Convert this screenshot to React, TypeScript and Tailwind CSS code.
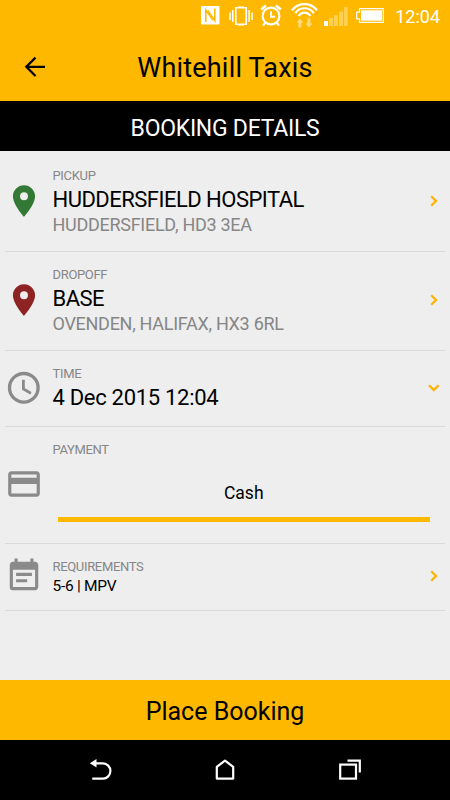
import type { ReactNode } from 'react';
import { MdPlace, MdPayment, MdEventNote } from 'react-icons/md';

function StatusBar() {
  return (
    <div className="h-[33px] flex items-start justify-end pr-[10px] text-white">
      {/* NFC */}
      <svg className="w-[19px] h-[19px] mt-[6px]" viewBox="0 0 19 19">
        <rect x="0" y="0" width="18.5" height="18.5" rx="1" fill="currentColor" />
        <path d="M4.8 16V4L11.8 14.2" fill="none" stroke="#ffb800" strokeWidth="1.5" />
        <path d="M13.8 2.6V14.6L6.8 4.4" fill="none" stroke="#ffb800" strokeWidth="1.5" />
      </svg>
      {/* Vibrate */}
      <svg className="w-6 h-5 mt-[6px] ml-[9px]" viewBox="0 0 24 20" fill="none" stroke="currentColor" strokeWidth="1.6">
        <path d="M6.8 1.8H17.2V18.2H6.8Z" />
        <path d="M9 1.2H15M9 18.8H15" />
        <path d="M3.8 4V16M1 6.5V14M20.2 4V16M23 6.5V14" />
      </svg>
      {/* Alarm */}
      <svg className="w-[22px] h-[23px] mt-[4px] ml-[7px]" viewBox="0 0 22 23" fill="none" stroke="currentColor" strokeWidth="2.2">
        <circle cx="11" cy="12" r="8.4" />
        <path d="M11 7.2V12.7H15.2" strokeWidth="1.9" />
        <path d="M1.2 5.6L6 1.5M20.8 5.6L16 1.5" strokeWidth="2.6" />
        <path d="M5.8 18L3 21.6M16.2 18L19 21.6" />
      </svg>
      {/* Wifi */}
      <svg className="w-[27px] h-[25px] mt-[3px] ml-[9px]" viewBox="0 0 27 25" fill="none" stroke="currentColor" strokeWidth="2.2">
        <path d="M1 7.3C7.5 -1 19.5 -1 26 7.3" />
        <path d="M4.2 10.2C9 3.6 18 3.6 22.8 10.2" />
        <path d="M7.5 13C10.5 8.6 16.5 8.6 19.5 13" />
        <g fill="#ffdb80" stroke="none">
          <path d="M8.9 15.5L12.3 19.5H10.4V24.5H7.4V19.5H5.5Z" />
          <path d="M17.9 24.5L14.5 20.5H16.4V15.5H19.4V20.5H21.3Z" />
        </g>
      </svg>
      {/* Signal */}
      <svg className="w-6 h-[19px] mt-[7px] ml-[6px]" viewBox="0 0 24 19" fill="#ffd050">
        <rect x="0" y="14" width="4" height="5" fill="currentColor" />
        <rect x="5" y="11" width="4" height="8" />
        <rect x="10" y="8" width="4" height="11" />
        <rect x="15" y="4.5" width="4" height="14.5" />
        <rect x="20" y="0" width="3.6" height="19" />
      </svg>
      {/* Battery */}
      <svg className="w-[28px] h-[15px] mt-[8px] ml-[8px]" viewBox="0 0 28 15">
        <path d="M3.5 0.7H27.3V14.3H3.5V10.8H0.7V4.2H3.5Z" fill="none" stroke="currentColor" strokeWidth="1.2" />
        <rect x="5" y="2.3" width="21" height="10.4" fill="currentColor" />
      </svg>
      <span className="ml-[11px] mt-[5px] text-[18px] leading-6">12:04</span>
    </div>
  );
}

function ArrowBack() {
  return (
    <svg className="w-[30px] h-[30px]" viewBox="0 0 30 30" fill="none" stroke="currentColor" strokeWidth="2.2">
      <path d="M25 14.8H6.5M15.5 5.6L6.3 14.8L15.5 24" />
    </svg>
  );
}

function ChevronRight() {
  return (
    <svg className="w-[22px] h-[22px]" viewBox="0 0 22 22" fill="none" stroke="currentColor" strokeWidth="2.3">
      <path d="M8.2 6.2L13 11L8.2 15.8" />
    </svg>
  );
}

function ChevronDown() {
  return (
    <svg className="w-[22px] h-[22px]" viewBox="0 0 22 22" fill="none" stroke="currentColor" strokeWidth="2.3">
      <path d="M6 8.2L10.8 13L15.6 8.2" />
    </svg>
  );
}

function Clock() {
  return (
    <svg className="w-[38px] h-[38px]" viewBox="0 0 38 38" fill="none" stroke="currentColor">
      <circle cx="18.8" cy="18.8" r="14.3" strokeWidth="3.3" />
      <path d="M18.4 10.8V19.9L25.9 24.2" strokeWidth="2.8" />
    </svg>
  );
}

interface RowProps {
  label: string;
  icon: ReactNode;
  height: string;
  arrow?: ReactNode;
  children: ReactNode;
}

function Row({ label, icon, height, arrow, children }: RowProps) {
  return (
    <div className={`mx-[5px] flex border-b border-[#dadada] ${height}`}>
      <div className="w-[47.5px] pb-[2px] flex items-center text-[38px] text-[#8a8a8a]">{icon}</div>
      <div className="flex-1 pt-[15px] whitespace-nowrap">
        <div className="text-[13px] leading-4 tracking-[-0.33px] text-[#868686]">{label}</div>
        {children}
      </div>
      {arrow && <div className="pb-[2px] flex items-center text-[#ffb300]">{arrow}</div>}
    </div>
  );
}

function Address({ title, detail }: { title: string; detail: string }) {
  return (
    <>
      <div className="text-[22px] leading-[31px] tracking-[-0.52px]">{title}</div>
      <div className="text-[18px] leading-5 tracking-[-0.28px] text-[#868686]">{detail}</div>
    </>
  );
}

function NavBar() {
  return (
    <nav className="h-[60px] pt-px bg-black text-white flex items-center justify-between px-[88px]">
      <svg className="w-6 h-6" viewBox="0 0 24 24">
        <path d="M7 4.4H15A7.2 7.4 0 0 1 15 19.6H4.2" fill="none" stroke="currentColor" strokeWidth="2.2" />
        <path d="M1.8 4.3L8.5 0V8.4Z" fill="currentColor" />
      </svg>
      <svg className="w-6 h-6" viewBox="0 0 24 24" fill="none" stroke="currentColor" strokeWidth="2.2" strokeLinejoin="round">
        <path d="M3.8 7.8L12 1.6L20.2 7.8V19.6H3.8Z" />
      </svg>
      <svg className="w-6 h-6" viewBox="0 0 24 24" fill="none" stroke="currentColor" strokeWidth="2.2">
        <rect x="2.2" y="5.6" width="15.8" height="14" />
        <path d="M9.5 1.6H21.8V13.4" />
      </svg>
    </nav>
  );
}

export default function App() {
  return (
    <div className="w-[450px] h-[800px] flex flex-col bg-[#eeeeee] text-black font-[Roboto,sans-serif] overflow-hidden">
      <div className="bg-[#ffb800]">
        <StatusBar />
        <header className="h-[68px] flex items-center px-5">
          <button className="w-[30px]">
            <ArrowBack />
          </button>
          <h1 className="flex-1 pt-0.5 pr-[30px] text-center text-[27px] leading-8 tracking-[0.2px]">Whitehill Taxis</h1>
        </header>
      </div>
      <h2 className="h-[50px] bg-black text-white text-center text-[23px] leading-[55px] tracking-[-0.28px]">
        BOOKING DETAILS
      </h2>

      <main className="flex-1 pt-[2px]">
        <Row label="PICKUP" icon={<MdPlace className="text-[#347835]" />} height="h-[99px]" arrow={<ChevronRight />}>
          <Address title="HUDDERSFIELD HOSPITAL" detail="HUDDERSFIELD, HD3 3EA" />
        </Row>
        <Row label="DROPOFF" icon={<MdPlace className="text-[#8e2323]" />} height="h-[99px]" arrow={<ChevronRight />}>
          <Address title="BASE" detail="OVENDEN, HALIFAX, HX3 6RL" />
        </Row>
        <Row label="TIME" icon={<Clock />} height="h-[76px]" arrow={<ChevronDown />}>
          <div className="text-[22px] leading-[31px] tracking-[-0.3px]">4 Dec 2015 12:04</div>
        </Row>
        <Row label="PAYMENT" icon={<MdPayment />} height="h-[117px]">
          <div className="mt-[23px] ml-[5px] mr-[15px] h-[41px] border-b-[5px] border-[#ffb800] text-center text-[17.5px] leading-6">
            Cash
          </div>
        </Row>
        <Row label="REQUIREMENTS" icon={<MdEventNote />} height="h-[67px]" arrow={<ChevronRight />}>
          <div className="text-[15.5px] leading-[22px] tracking-[-0.27px]">5-6 | MPV</div>
        </Row>
      </main>

      <button className="h-[60px] pt-[3px] bg-[#ffb800] text-[25px] leading-[57px]">Place Booking</button>
      <NavBar />
    </div>
  );
}
